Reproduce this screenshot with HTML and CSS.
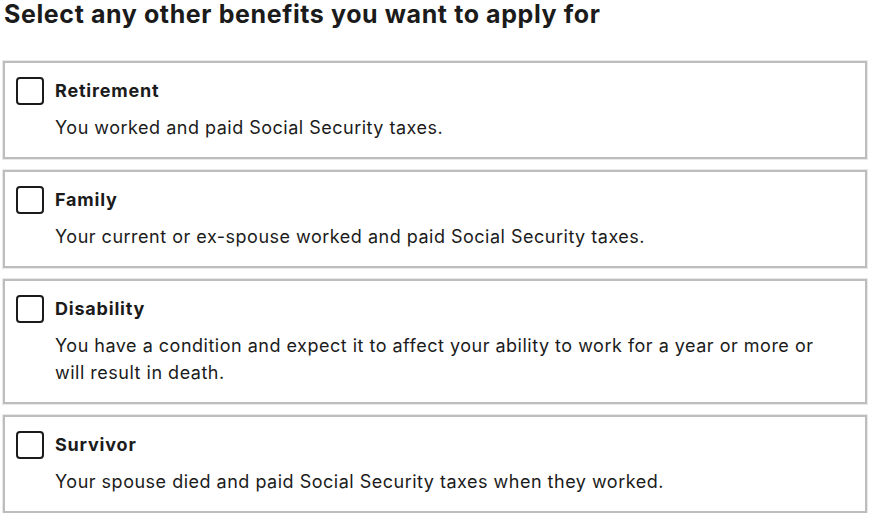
FILE: index.html
```html
<!DOCTYPE html>
<html lang="en">
<head>
<meta charset="utf-8">
<title>Select benefits</title>
<link rel="stylesheet" href="styles.css">
</head>
<body>
<fieldset class="benefits">
  <legend class="benefits__legend">Select any other benefits you want to apply for</legend>
  <div class="benefits__list">
    <label class="tile">
      <span class="tile__row">
        <input type="checkbox" class="tile__check">
        <span class="tile__title">Retirement</span>
      </span>
      <span class="tile__desc">You worked and paid Social Security taxes.</span>
    </label>
    <label class="tile">
      <span class="tile__row">
        <input type="checkbox" class="tile__check">
        <span class="tile__title">Family</span>
      </span>
      <span class="tile__desc">Your current or ex-spouse worked and paid Social Security taxes.</span>
    </label>
    <label class="tile">
      <span class="tile__row">
        <input type="checkbox" class="tile__check">
        <span class="tile__title">Disability</span>
      </span>
      <span class="tile__desc">You have a condition and expect it to affect your ability to work for a year or more or will result in death.</span>
    </label>
    <label class="tile">
      <span class="tile__row">
        <input type="checkbox" class="tile__check">
        <span class="tile__title">Survivor</span>
      </span>
      <span class="tile__desc">Your spouse died and paid Social Security taxes when they worked.</span>
    </label>
  </div>
</fieldset>
</body>
</html>
```
FILE: styles.css
```css
* { box-sizing: border-box; }

html, body {
  margin: 0;
  padding: 0;
  background: #ffffff;
}

body {
  font-family: Inter, Roboto, "Liberation Sans", sans-serif;
  color: #1b1b1b;
}

.benefits {
  margin: 0;
  padding: 0 4px 0 3px;
  border: 0;
  min-width: 0;
}

.benefits__legend {
  display: block;
  padding: 0 0 0 1px;
  margin: 0;
  font-size: 25px;
  font-weight: 700;
  letter-spacing: 0.6px;
  line-height: 28px;
  color: #1b1b1b;
}

.benefits__list {
  display: flex;
  flex-direction: column;
  gap: 11px;
  margin-top: 33px;
}

.tile {
  display: flex;
  flex-direction: column;
  gap: 9px;
  border: 2px solid #bdbdbd;
  box-shadow: 0 0 0 1px #e8e8e8;
  padding: 14px 40px 16px 11px;
  background: #fff;
  cursor: pointer;
}

.tile__row {
  display: flex;
  align-items: center;
  gap: 11px;
  height: 28px;
}

.tile__check {
  appearance: none;
  -webkit-appearance: none;
  margin: 0;
  width: 28px;
  height: 28px;
  flex: none;
  border: 2px solid #1b1b1b;
  border-radius: 4px;
  background: #fff;
}

.tile__title {
  font-size: 18px;
  font-weight: 700;
  letter-spacing: 0.8px;
  line-height: 26px;
}

.tile__desc {
  padding-left: 39px;
  font-size: 18px;
  letter-spacing: 0.5px;
  line-height: 27px;
}
```
